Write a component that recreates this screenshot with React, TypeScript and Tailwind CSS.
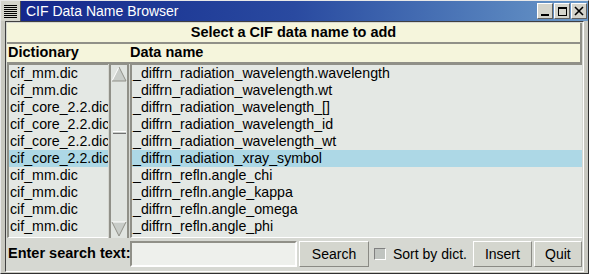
import React from "react";

const dicts = [
  "cif_mm.dic",
  "cif_mm.dic",
  "cif_core_2.2.dic",
  "cif_core_2.2.dic",
  "cif_core_2.2.dic",
  "cif_core_2.2.dic",
  "cif_mm.dic",
  "cif_mm.dic",
  "cif_mm.dic",
  "cif_mm.dic",
];
const names = [
  "_diffrn_radiation_wavelength.wavelength",
  "_diffrn_radiation_wavelength.wt",
  "_diffrn_radiation_wavelength_[]",
  "_diffrn_radiation_wavelength_id",
  "_diffrn_radiation_wavelength_wt",
  "_diffrn_radiation_xray_symbol",
  "_diffrn_refln.angle_chi",
  "_diffrn_refln.angle_kappa",
  "_diffrn_refln.angle_omega",
  "_diffrn_refln.angle_phi",
];
const SEL = 5;

function WinBtn({ children }: { children: React.ReactNode }) {
  return (
    <div className="w-[16px] h-[16px] bg-[#d4d4cc] border border-t-white border-l-white border-r-[#606060] border-b-[#606060] flex items-center justify-center">
      {children}
    </div>
  );
}

function Button({ label, w }: { label: string; w: string }) {
  return (
    <div
      className={`${w} h-[26px] bg-[#d4d6ce] border border-t-white border-l-white border-r-[#8a8a84] border-b-[#8a8a84] flex items-center justify-center text-[14px] text-black`}
    >
      {label}
    </div>
  );
}

export default function App() {
  return (
    <div
      className="w-[589px] h-[274px] bg-[#c8c8c0] border border-t-[#e8e8e8] border-l-[#e8e8e8] border-r-[#303030] border-b-[#303030] flex flex-col overflow-hidden"
      style={{ fontFamily: '"Liberation Sans", Arial, sans-serif' }}
    >
      {/* Title bar */}
      <div className="h-[20px] flex items-center bg-gradient-to-r from-[#14248a] via-[#2a4aa0] to-[#6a98c8] shrink-0">
        <div className="w-[20px] h-[20px] bg-[#d4d4cc] flex flex-col justify-center items-center gap-[1px] border-r border-[#505050]">
          {Array.from({ length: 7 }).map((_, i) => (
            <div key={i} className="w-[13px] h-[1px] bg-black" />
          ))}
        </div>
        <div className="ml-[5px] text-white text-[14px] leading-none">CIF Data Name Browser</div>
        <div className="ml-auto flex gap-[1px] mr-[1px]">
          <WinBtn>
            <div className="w-[8px] h-[2px] bg-black mt-[7px]" />
          </WinBtn>
          <WinBtn>
            <div className="w-[9px] h-[9px] border border-black border-t-2" />
          </WinBtn>
          <WinBtn>
            <svg width="10" height="10" viewBox="0 0 10 10">
              <path d="M1 1 L9 9 M9 1 L1 9" stroke="black" strokeWidth="1.6" />
            </svg>
          </WinBtn>
        </div>
      </div>
      {/* Client area */}
      <div className="flex-1 mx-[4px] mb-[1px] border border-t-[#404040] border-l-[#404040] border-r-white border-b-white bg-[#d6d8d2] flex flex-col p-[1px]">
        <div className="h-[21px] bg-[#f5f5dc] border-b-2 border-r-2 border-[#909088] flex items-center justify-center font-bold text-[14.5px] text-black">
          Select a CIF data name to add
        </div>
        <div className="h-[20px] bg-[#f5f5dc] border-b-2 border-r-2 border-[#909088] flex items-center font-bold text-[14.5px] text-black">
          <div className="w-[123px] pl-[1px]">Dictionary</div>
          <div>Data name</div>
        </div>
        <div className="h-[174px] flex bg-[#d6d8d2]">
          {/* dictionary list */}
          <div className="w-[101px] bg-[#e4e8e4] border-l-2 border-t border-[#909088] border-b border-b-white overflow-hidden">
            {dicts.map((d, i) => (
              <div
                key={i}
                className={`h-[17px] leading-[17px] text-[14.2px] text-black pl-[1px] whitespace-nowrap ${i === SEL ? "bg-[#add8e6]" : ""}`}
              >
                {d}
              </div>
            ))}
          </div>
          {/* scrollbar */}
          <div className="w-[20px] ml-[1px] bg-[#e0e4e0] border-l-2 border-r-2 border-t border-[#909088] flex flex-col items-center relative">
            <svg width="16" height="16" viewBox="0 0 16 16" className="mt-[1px]">
              <path d="M8 1 L15 15 L1 15 Z" fill="#c8ccc8" />
              <path d="M8 1 L1 15" stroke="#ffffff" strokeWidth="1" />
              <path d="M8 1 L15 15 L1 15" stroke="#909088" strokeWidth="1" fill="none" />
            </svg>
            <div className="absolute top-[66px] left-[2px] w-[13px] h-[3px] bg-[#c8ccc8] border-t border-t-white border-b border-b-[#707070]" />
            <svg width="16" height="16" viewBox="0 0 16 16" className="mt-auto mb-[1px]">
              <path d="M1 1 L15 1 L8 15 Z" fill="#c8ccc8" />
              <path d="M1 1 L15 1" stroke="#ffffff" strokeWidth="1" />
              <path d="M15 1 L8 15 L1 1" stroke="#909088" strokeWidth="1" fill="none" />
            </svg>
          </div>
          {/* data list */}
          <div className="flex-1 ml-[1px] bg-[#e4e8e4] border-l-2 border-t border-[#909088] border-b border-b-white overflow-hidden">
            {names.map((d, i) => (
              <div
                key={i}
                className={`h-[17px] leading-[17px] text-[14.2px] text-black pl-[1px] whitespace-nowrap ${i === SEL ? "bg-[#add8e6]" : ""}`}
              >
                {d}
              </div>
            ))}
          </div>
        </div>
        {/* bottom controls */}
        <div className="flex-1 flex items-center">
          <div className="w-[123px] font-bold text-[14.5px] text-black pl-[1px] whitespace-nowrap">Enter search text:</div>
          <div className="w-[167px] h-[26px] bg-[#eef0ec] border-2 border-t-[#909088] border-l-[#909088] border-r-white border-b-white" />
          <div className="ml-[2px]">
            <Button label="Search" w="w-[70px]" />
          </div>
          <div className="ml-[5px] w-[12px] h-[12px] bg-[#c0c4c0] border border-t-[#808080] border-l-[#808080] border-r-white border-b-white" />
          <div className="ml-[7px] text-[14px] text-black">Sort by dict.</div>
          <div className="ml-[6px]">
            <Button label="Insert" w="w-[59px]" />
          </div>
          <div className="ml-[2px]">
            <Button label="Quit" w="w-[48px]" />
          </div>
        </div>
      </div>
    </div>
  );
}
